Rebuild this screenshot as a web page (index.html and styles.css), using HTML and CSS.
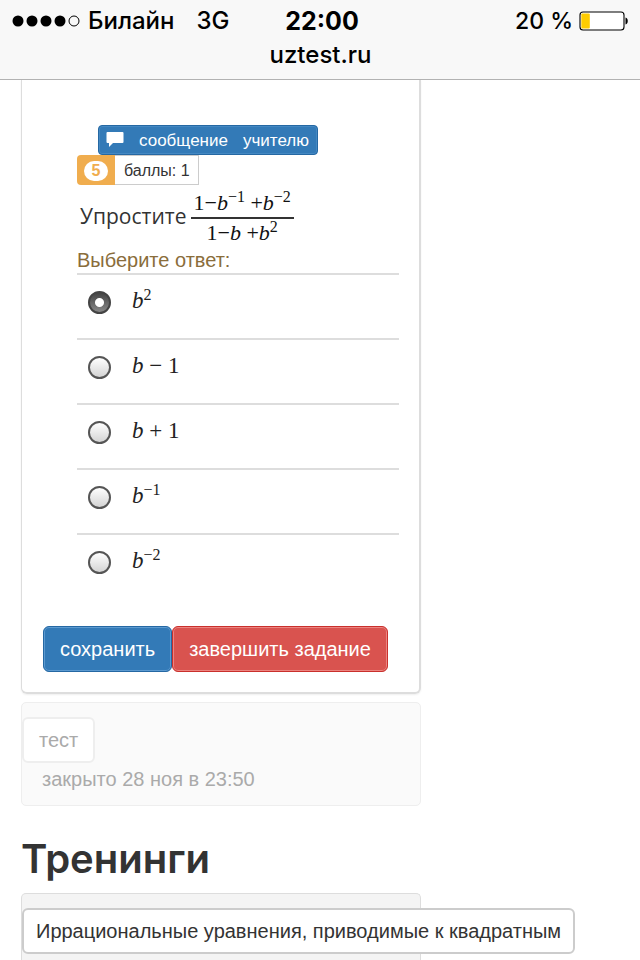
FILE: index.html
```
<!DOCTYPE html>
<html lang="ru">
<head>
<meta charset="utf-8">
<meta name="viewport" content="width=device-width, initial-scale=1">
<title>uztest.ru</title>
<link rel="stylesheet" href="styles.css">
</head>
<body>
<header class="browser-bar">
  <div class="status">
    <div class="status-left">
      <svg class="signal" width="68" height="12" viewBox="0 0 68 12" aria-hidden="true">
        <circle cx="6" cy="6" r="5.5"/><circle cx="20" cy="6" r="5.5"/><circle cx="34" cy="6" r="5.5"/><circle cx="48" cy="6" r="5.5"/>
        <circle cx="62" cy="6" r="5" fill="none" stroke="#000"/>
      </svg>
      <span>Билайн</span>
      <span class="network">3G</span>
    </div>
    <time class="clock">22:00</time>
    <div class="status-right">
      <span>20 %</span>
      <svg width="50" height="20" viewBox="0 0 50 20" aria-hidden="true">
        <rect x="1" y="1" width="44" height="18" rx="3" fill="#fff" stroke="#000" stroke-width="1.1"/>
        <rect x="2.300" y="2.500" width="8.500" height="15" rx="1" fill="#fc0"/>
        <path d="M46.500 6.500c3 .5 3 6.500 0 7z"/>
      </svg>
    </div>
  </div>
  <div class="address">uztest.ru</div>
</header>
<main class="page">
  <form class="card task">
    <div class="question">
      <button type="button" class="message">
        <svg width="18" height="16" viewBox="0 0 18 16" aria-hidden="true"><path d="M1.500 0h15q1 0 1 1v9q0 1-1 1H7l-4 4v-4H1.500q-1 0-1-1V1q0-1 1-1z" fill="#fff"/></svg>
        <span>сообщение</span><span>учителю</span>
      </button>
      <div class="score">
        <span class="number"><span class="badge">5</span></span>
        <span class="points">баллы: 1</span>
      </div>
      <div class="formula">
        <span>Упростите</span>
        <span class="fraction">
          <span class="top">1−<i>b</i><sup>−1</sup> +<i>b</i><sup>−2</sup></span>
          <span class="bottom">1−<i>b</i> +<i>b</i><sup>2</sup></span>
        </span>
      </div>
      <fieldset class="answers">
        <legend>Выберите ответ:</legend>
        <label class="answer"><input type="radio" name="answer" checked><span class="math"><i>b</i><sup>2</sup></span></label>
        <label class="answer"><input type="radio" name="answer"><span class="math"><i>b</i> − 1</span></label>
        <label class="answer"><input type="radio" name="answer"><span class="math"><i>b</i> + 1</span></label>
        <label class="answer"><input type="radio" name="answer"><span class="math"><i>b</i><sup>−1</sup></span></label>
        <label class="answer"><input type="radio" name="answer"><span class="math"><i>b</i><sup>−2</sup></span></label>
      </fieldset>
    </div>
    <div class="actions">
      <button type="button" class="btn primary">сохранить</button>
      <button type="button" class="btn danger">завершить задание</button>
    </div>
  </form>
  <section class="card closed">
    <button type="button" class="btn">тест</button>
    <p>закрыто 28 ноя в 23:50</p>
  </section>
  <h1>Тренинги</h1>
  <section class="card trainings">
    <button type="button" class="btn">Иррациональные уравнения, приводимые к квадратным</button>
  </section>
</main>
</body>
</html>
```
FILE: styles.css
```
* { box-sizing: border-box; }
body {
  margin: 0;
  background: #fff;
  color: #333;
  font: 20px/26px "Liberation Sans", Arial, sans-serif;
}
button { font: inherit; color: inherit; cursor: pointer; }
svg { display: block; flex: none; }

.browser-bar {
  height: 80px;
  padding: 4px 11px 0 12px;
  background: #f8f8f8;
  border-bottom: 1px solid #b2b2b2;
  color: #000;
  font: 500 24px/34px Inter, sans-serif;
}
.status { display: grid; grid-template-columns: 1fr auto 1fr; align-items: center; }
.status-left, .status-right { display: flex; align-items: center; gap: 8px; }
.status-right { justify-content: flex-end; gap: 6px; font-size: 23px; }
.network { margin-left: 14px; }
.clock { padding-left: 3px; font-weight: 700; font-size: 25px; }
.address { text-align: center; }

.page { padding: 0 19px 0 21px; }
.card {
  width: 66.6667%;
  border: 1px solid #ddd;
  border-radius: 5px;
}
.task {
  padding: 45px 20px 20px;
  border-width: 0 2px 2px 1px;
  border-radius: 0 0 6px 6px;
  box-shadow: 0 1px 2px #0001;
}
.question { padding-left: 35px; }
.message {
  display: flex;
  align-items: center;
  gap: 15px;
  height: 30px;
  margin-left: 21px;
  padding: 2px 8px 0 7px;
  border: 1px solid #2568a3;
  border-radius: 4px;
  background: #337ab7;
  box-shadow: inset 0 0 0 1px #4488c2;
  color: #fff;
  font-size: 17px;
}
.message svg { margin-bottom: 2px; }
.score { display: flex; width: 122px; height: 30px; font-size: 16px; }
.number {
  display: flex;
  align-items: center;
  justify-content: center;
  width: 38px;
  padding-top: 2px;
  border-radius: 4px 0 0 4px;
  background: #f0ad4e;
}
.badge {
  width: 24px;
  border-radius: 10px;
  background: #fff;
  color: #f0ad4e;
  font-weight: 700;
  line-height: 20px;
  text-align: center;
}
.points { flex: 1; border: 1px solid #ccc; border-left: 0; padding-left: 9px; line-height: 30px; white-space: nowrap; }

sup { font-size: 16px; line-height: 0; vertical-align: 8px; }
.formula {
  display: flex;
  align-items: center;
  gap: 5px;
  height: 62px;
  padding-left: 3px;
  font: 21px/30px "Open Sans", sans-serif;
}
.fraction { color: #111; font: 22px/28px "Liberation Serif", serif; text-align: center; }
.top, .bottom { display: block; padding: 0 3px 0 2px; }
.top { padding-top: 4px; border-bottom: 2px solid #333; }

.answers { margin: 0; padding: 0; border: 0; }
legend { padding: 0; color: #8a6d3b; line-height: 26px; }
.answer {
  display: flex;
  align-items: flex-start;
  gap: 21px;
  height: 65px;
  padding: 16px 0 0 11px;
  border-top: 2px solid #ddd;
}
.answer input {
  appearance: none;
  width: 23px;
  height: 23px;
  margin: 0;
  border: 2px solid #555;
  border-radius: 50%;
  background: linear-gradient(#fff, #d4d4d4);
}
.answer input:checked {
  border-color: #444;
  background: radial-gradient(circle, #fff 0 4px, transparent 5px), linear-gradient(#444, #888);
}
.math { color: #222; font: 23px/20px "Liberation Serif", serif; }

.actions { display: flex; margin-top: 28px; padding-left: 1px; }
.btn {
  height: 46px;
  padding: 0 15px;
  border: 2px solid #ccc;
  border-radius: 6px;
  background: #fff;
  white-space: nowrap;
}
.primary, .danger { padding: 0 16px; }
.primary { border: 1px solid #2568a3; background: #337ab7; box-shadow: inset 0 0 0 1px #5c9ad0; color: #fff; }
.danger { border: 1px solid #c9302c; background: #d9534f; box-shadow: inset 0 0 0 1px #ec8480; color: #fff; }
.closed { margin-top: 8px; padding: 14px 0 13px; border-color: #eee; background: #fafafa; color: #aaa; }
.closed .btn { border-color: #eee; }
.closed p { margin: 3px 0 0 20px; }
h1 { margin: 29px 0 10px; font: 600 40px/48px Inter, sans-serif; }
.trainings { padding: 14px 0 6px; border-bottom: 0; border-radius: 5px 5px 0 0; background: #f4f4f4; }
.trainings .btn { padding: 0 12px; }
```
